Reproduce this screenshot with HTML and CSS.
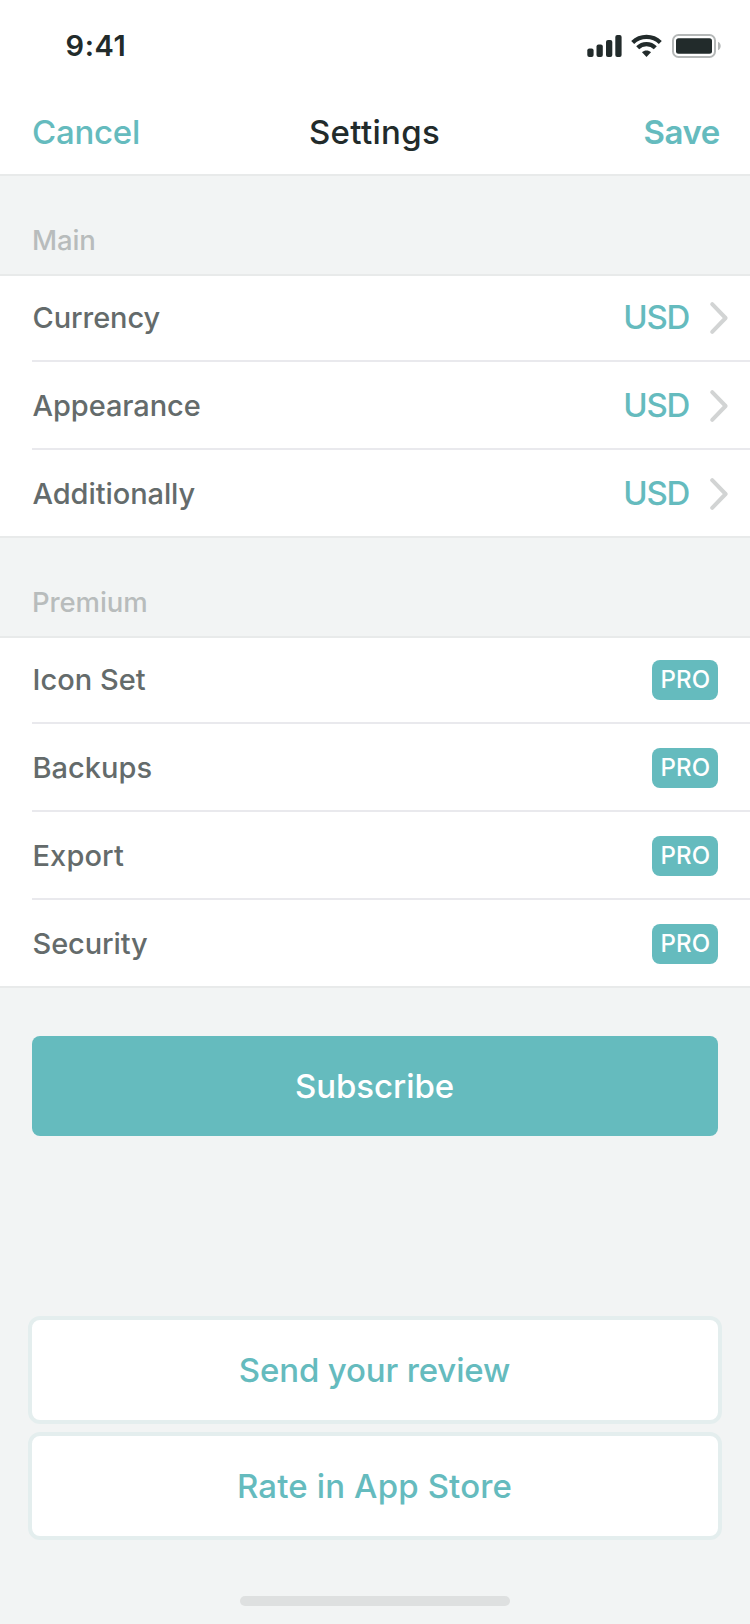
FILE: index.html
```html
<!DOCTYPE html>
<html lang="en">
<head>
<meta charset="utf-8">
<title>Settings</title>
<link rel="stylesheet" href="styles.css">
</head>
<body>
<svg class="defs" width="0" height="0" aria-hidden="true">
  <symbol id="chevron" viewBox="0 0 20 34">
    <path d="M3.200 3.200 16.600 17 3.200 30.800" fill="none" stroke="#d2d4d4" stroke-width="4" stroke-linecap="round" stroke-linejoin="round"/>
  </symbol>
</svg>
<div class="screen">
  <header class="top">
    <div class="status">
      <span class="time">9:41</span>
      <svg class="status-icons" width="136" height="26" viewBox="0 0 136 26" fill="#222b2b">
        <rect x="1.300" y="15.500" width="6.300" height="8.500" rx="2"/>
        <rect x="10.500" y="11.500" width="6.300" height="12.500" rx="2"/>
        <rect x="20" y="7" width="6.300" height="17" rx="2"/>
        <rect x="29.300" y="2" width="6.300" height="22" rx="2"/>
        <g fill="none" stroke="#222b2b" stroke-width="4.200">
          <path d="M46.700 9.600a19.600 19.600 0 0 1 27.600 0"/>
          <path d="M51.700 14.700a12.400 12.400 0 0 1 17.600 0"/>
        </g>
        <path d="M60.500 24 56 19.200c2.400-2.300 6.600-2.300 9 0z"/>
        <rect x="87" y="2" width="42" height="22" rx="5.500" fill="none" stroke="#b5b8b8" stroke-width="2"/>
        <rect x="90" y="5.300" width="36" height="15.400" rx="2.500"/>
        <path d="M132 8.700c3.600 1.600 3.600 7 0 8.600z" fill="#b5b8b8"/>
      </svg>
    </div>
    <nav class="nav">
      <a class="cancel">Cancel</a>
      <h1 class="title">Settings</h1>
      <a class="save">Save</a>
    </nav>
  </header>

  <h2 class="group-title">Main</h2>
  <ul class="list">
    <li class="row"><span class="label">Currency</span><span class="value">USD</span><svg class="chevron" width="20" height="34"><use href="#chevron"/></svg></li>
    <li class="row"><span class="label">Appearance</span><span class="value">USD</span><svg class="chevron" width="20" height="34"><use href="#chevron"/></svg></li>
    <li class="row"><span class="label">Additionally</span><span class="value">USD</span><svg class="chevron" width="20" height="34"><use href="#chevron"/></svg></li>
  </ul>

  <h2 class="group-title">Premium</h2>
  <ul class="list">
    <li class="row"><span class="label normal">Icon Set</span><span class="badge">PRO</span></li>
    <li class="row"><span class="label normal">Backups</span><span class="badge">PRO</span></li>
    <li class="row"><span class="label loose">Export</span><span class="badge">PRO</span></li>
    <li class="row"><span class="label tight">Security</span><span class="badge">PRO</span></li>
  </ul>

  <div class="actions">
    <button class="button primary">Subscribe</button>
    <div class="secondary">
      <button class="button outline review">Send your review</button>
      <button class="button outline rate">Rate in App Store</button>
    </div>
  </div>
  <div class="home-indicator"></div>
</div>
</body>
</html>
```

FILE: styles.css
```css
* { box-sizing: border-box; }

body {
  margin: 0;
  background: #f2f4f4;
  color: #222b2b;
  font-family: Inter, "Liberation Sans", sans-serif;
}

.defs { display: block; }

.screen {
  display: flex;
  flex-direction: column;
  width: 750px;
  height: 1624px;
}

/* Status bar and navigation */
.top {
  height: 176px;
  background: #fff;
  border-bottom: 2px solid #e8eaea;
}

.status {
  display: flex;
  justify-content: space-between;
  align-items: center;
  height: 88px;
  padding: 3px 28px 0 65.500px;
}

.time {
  font-size: 29px;
  font-weight: 600;
  letter-spacing: 0.6px;
}

.nav {
  display: grid;
  grid-template-columns: 1fr auto 1fr;
  align-items: center;
  height: 86px;
  padding: 2px 30px 0 32px;
  font-size: 33px;
}

.cancel {
  color: #65bbbe;
  font-weight: 500;
  letter-spacing: -0.25px;
}

.title {
  margin: 0;
  font-size: 33px;
  font-weight: 500;
  letter-spacing: 0.3px;
  margin-right: 3px;
}

.save {
  justify-self: end;
  color: #65bbbe;
  font-weight: 600;
  letter-spacing: -0.4px;
}

/* Grouped lists */
.group-title {
  display: flex;
  align-items: flex-end;
  height: 98px;
  margin: 0;
  padding: 0 32px 18px 32px;
  color: #b8bcbc;
  font-size: 27.500px;
  font-weight: 500;
  line-height: 32px;
  letter-spacing: -0.1px;
}

.list {
  margin: 0;
  padding: 0;
  list-style: none;
  background: #fff;
  border-top: 2px solid #e8eaea;
  border-bottom: 2px solid #e8eaea;
}

.row {
  display: flex;
  align-items: center;
  height: 88px;
  margin-left: 32px;
  padding: 2px 21px 0 0;
  border-bottom: 2px solid #e9e9ed;
}

.row:first-child { height: 86px; padding-top: 0; }
.row:last-child { height: 86px; border-bottom: 0; }

.label {
  flex: 1;
  padding: 0 0 2px 0.500px;
  color: #646b6b;
  font-size: 29px;
  font-weight: 500;
  letter-spacing: -0.08px;
}

.label.normal { letter-spacing: 0.03px; }
.label.loose { letter-spacing: 0.12px; }
.label.tight { letter-spacing: -0.1px; }

.value {
  margin-right: 20px;
  padding-bottom: 3px;
  color: #65bbbe;
  font-size: 33px;
  font-weight: 500;
  letter-spacing: -1.300px;
}

.chevron { display: block; }

.badge {
  width: 66px;
  height: 40px;
  margin-right: 11px;
  padding-left: 1px;
  border-radius: 8px;
  background: #65bbbe;
  color: #fff;
  font-size: 24px;
  font-weight: 500;
  line-height: 40px;
  letter-spacing: 0.2px;
  text-align: center;
}

/* Buttons */
.actions {
  display: flex;
  flex: 1;
  flex-direction: column;
  justify-content: space-between;
  padding: 48px 28px 56px;
}

.button {
  display: block;
  height: 100px;
  padding: 0 1px 0 0;
  border: 0;
  border-radius: 8px;
  font: 500 33px/100px Inter, "Liberation Sans", sans-serif;
  text-align: center;
}

.primary {
  margin: 0 4px;
  background: #65bbbe;
  color: #fff;
  letter-spacing: -0.06px;
}

.secondary {
  display: grid;
  gap: 8px;
}

.outline {
  height: 108px;
  border: 4px solid #e4eeee;
  border-radius: 12px;
  background: #fff;
  color: #65bbbe;
}

.review { letter-spacing: -0.15px; }
.rate { letter-spacing: 0.14px; }

.home-indicator {
  width: 270px;
  height: 10px;
  margin: 0 auto 18px;
  border-radius: 5px;
  background: #dee0e0;
}
```
